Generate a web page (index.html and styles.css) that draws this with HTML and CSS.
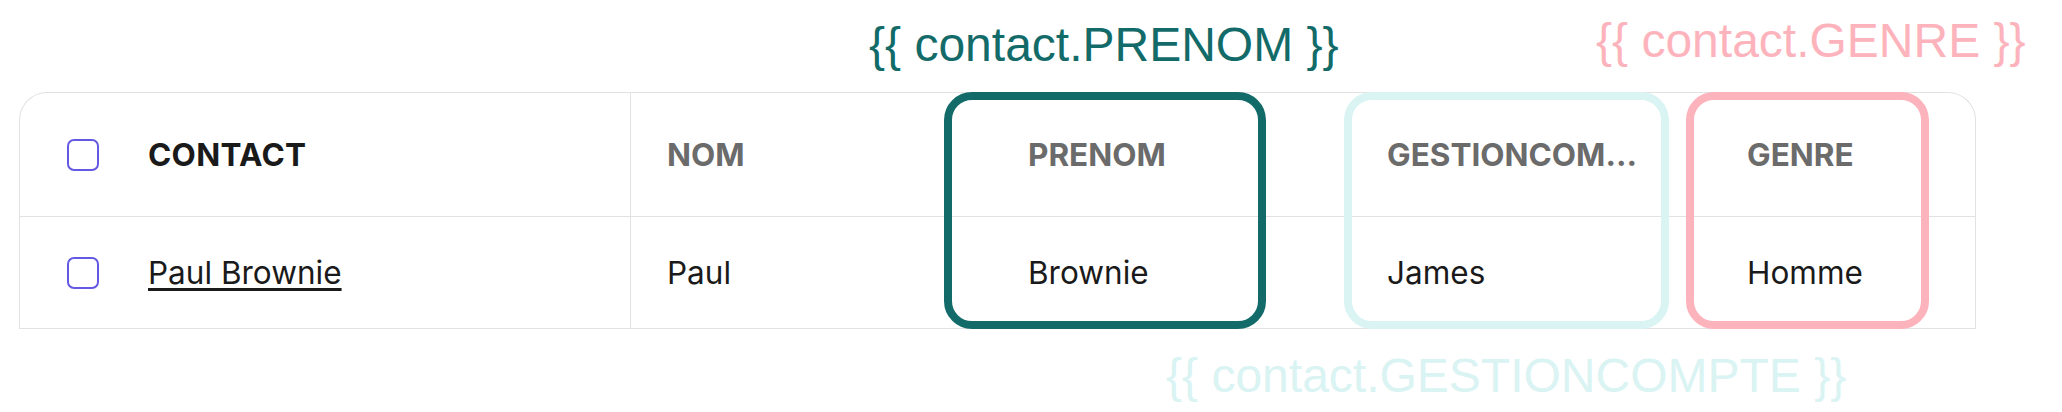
FILE: index.html
```html
<!DOCTYPE html>
<html lang="fr">
<head>
<meta charset="utf-8">
<title>Contacts</title>
<link rel="stylesheet" href="styles.css">
</head>
<body>
<div class="canvas">
  <div class="table">
    <div class="cell head first"><span class="check"></span><span class="title">CONTACT</span></div>
    <div class="cell head"><span class="col">NOM</span></div>
    <div class="cell head"><span class="col">PRENOM</span></div>
    <div class="cell head"><span class="col trunc">GESTIONCOMPTE</span></div>
    <div class="cell head"><span class="col">GENRE</span></div>

    <div class="cell body first"><span class="check"></span><a class="link" href="#">Paul Brownie</a></div>
    <div class="cell body"><span class="val">Paul</span></div>
    <div class="cell body"><span class="val">Brownie</span></div>
    <div class="cell body"><span class="val">James</span></div>
    <div class="cell body"><span class="val">Homme</span></div>
  </div>

  <div class="box box-prenom"></div>
  <div class="box box-gestion"></div>
  <div class="box box-genre"></div>

  <div class="tag tag-prenom">{{ contact.PRENOM }}</div>
  <div class="tag tag-genre">{{ contact.GENRE }}</div>
  <div class="tag tag-gestion">{{ contact.GESTIONCOMPTE }}</div>
</div>
</body>
</html>
```
FILE: styles.css
```css
* { box-sizing: border-box; }
html, body { margin: 0; padding: 0; background: #ffffff; }
body { width: 2062px; height: 412px; overflow: hidden; font-family: Inter, "Liberation Sans", sans-serif; }

.canvas { position: relative; width: 2062px; height: 412px; padding: 92px 0 0 19px; }

.table {
  width: 1957px;
  display: grid;
  grid-template-columns: 611px 361px 359px 360px 1fr;
  border: 1.5px solid #e2e2e2;
  border-bottom: 0;
  border-radius: 28px 28px 0 0;
}

.cell {
  display: flex;
  align-items: center;
  padding-left: 36px;
  border-bottom: 1.5px solid #e2e2e2;
  min-width: 0;
}
.cell.head { height: 124px; }
.cell.body { height: 112px; }
.cell.first { padding-left: 47px; border-right: 1.5px solid #e2e2e2; gap: 49px; }

.check {
  width: 32px; height: 32px;
  border: 2px solid #6359e3;
  border-radius: 7px;
  flex: none;
}

.title { font-size: 31.5px; font-weight: 700; color: #1a1a1a; letter-spacing: 0.3px; }
.col { font-size: 31.5px; font-weight: 700; color: #6b6b6b; }
.col.trunc { max-width: 259px; overflow: hidden; white-space: nowrap; text-overflow: ellipsis; }
.val, .link { font-size: 31.5px; color: #1a1a1a; }
.link { text-decoration: underline; text-underline-offset: 4px; text-decoration-thickness: 2.5px; }

.box {
  position: absolute;
  top: 92px;
  height: 237px;
  border: 8px solid;
  border-radius: 28px;
}
.box-prenom { left: 944px; width: 322px; border-color: #136b69; }
.box-gestion { left: 1344px; width: 325px; border-color: #daf3f3; }
.box-genre { left: 1686px; width: 243px; border-color: #fdb3bc; }

.tag {
  position: absolute;
  font-family: "Liberation Sans", Arial, sans-serif;
  font-size: 48px;
  line-height: 48px;
  white-space: nowrap;
}
.tag-prenom { left: 869px; top: 21px; color: #136b69; }
.tag-genre { left: 1596px; top: 17px; color: #fdb3bc; }
.tag-gestion { left: 1166px; top: 352px; color: #daf3f3; }
```
